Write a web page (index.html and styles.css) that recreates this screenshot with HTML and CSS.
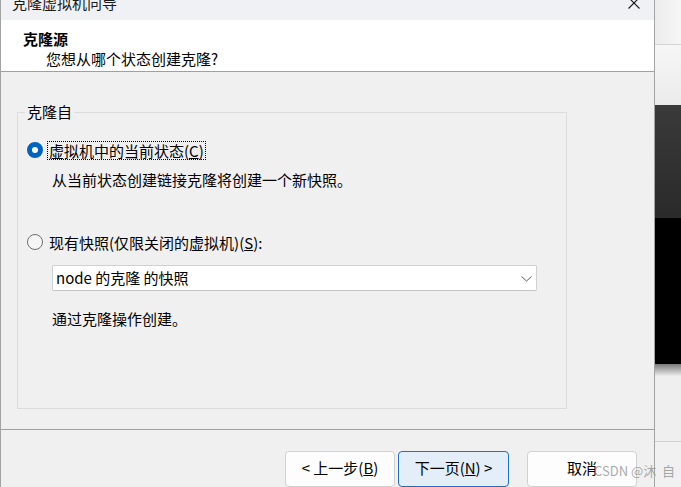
FILE: index.html
```html
<!DOCTYPE html>
<html lang="zh-CN">
<head>
<meta charset="utf-8">
<title>克隆虚拟机向导</title>
<link rel="stylesheet" href="styles.css">
</head>
<body>
<div class="screen">
  <div class="dialog">
    <div class="titlebar">
      <span class="title">克隆虚拟机向导</span>
      <svg class="close" width="12" height="12" viewBox="0 0 12 12"><path d="M0.5 0.5 L11.5 11.5 M11.5 0.5 L0.5 11.5" stroke="#1a1a1a" stroke-width="1.1" fill="none"/></svg>
    </div>
    <div class="header">
      <div class="h-title">克隆源</div>
      <div class="h-sub">您想从哪个状态创建克隆?</div>
    </div>
    <div class="content">
      <fieldset class="group">
        <legend class="legend">克隆自</legend>
        <div class="radio-row">
          <span class="radio checked"></span>
          <span class="label focused">虚拟机中的当前状态(<u>C</u>)</span>
        </div>
        <div class="desc desc-1">从当前状态创建链接克隆将创建一个新快照。</div>
        <div class="radio-row row-2">
          <span class="radio"></span>
          <span class="label">现有快照(仅限关闭的虚拟机)(<u>S</u>):</span>
        </div>
        <div class="select">
          <span class="select-text">node 的克隆 的快照</span>
          <svg class="chev" width="11" height="6" viewBox="0 0 11 6"><path d="M0.5 0.5 L5.5 5 L10.5 0.5" stroke="#5a5a5a" stroke-width="1" fill="none"/></svg>
        </div>
        <div class="desc desc-2">通过克隆操作创建。</div>
      </fieldset>
    </div>
    <div class="footer">
      <button class="btn">&lt; 上一步(<u>B</u>)</button>
      <button class="btn primary">下一页(<u>N</u>) &gt;</button>
      <button class="btn cancel">取消</button>
    </div>
  </div>
  <div class="side">
    <div class="s1"></div>
    <div class="s2"></div>
    <div class="s3"></div>
    <div class="s4"></div>
    <div class="s5"></div>
    <div class="s6"></div>
    <div class="s7"></div>
  </div>
  <div class="watermark">CSDN @沐 &nbsp;自</div>
</div>
</body>
</html>
```

FILE: styles.css
```css
html, body {
  margin: 0;
  padding: 0;
  overflow: hidden;
  width: 681px;
  height: 487px;
}
body {
  font-family: "Noto Sans CJK SC", "Noto Sans", sans-serif;
  font-size: 15px;
  color: #000;
}
.screen {
  position: relative;
  display: flex;
  width: 681px;
  height: 487px;
  overflow: hidden;
}
.dialog {
  width: 655px;
  box-sizing: border-box;
  border-left: 1px solid #a3a3a3;
  border-right: 1px solid #a3a3a3;
  background: #f0f0f0;
  display: flex;
  flex-direction: column;
  flex-shrink: 0;
}
.titlebar {
  height: 23px;
  background: #eff1f5;
  display: flex;
  align-items: flex-start;
  justify-content: space-between;
  overflow: hidden;
}
.title {
  margin-left: 11px;
  margin-top: -7px;
  line-height: 20px;
  font-size: 15px;
  color: #1a1a1a;
}
.close {
  margin-right: 14px;
  margin-top: -3px;
}
.header {
  background: #fff;
  border-bottom: 1px solid #a0a0a0;
  padding-top: 9px;
  box-sizing: border-box;
  height: 59px;
}
.h-title {
  margin-left: 22px;
  font-weight: bold;
  line-height: 20px;
}
.h-sub {
  margin-left: 45px;
  line-height: 20px;
}
.content {
  padding: 30px 0 20px 16px;
}
.group {
  margin: 0;
  width: 550px;
  box-sizing: border-box;
  border: 1px solid #dcdcdc;
  padding: 18px 0 79px 0;
  min-width: 0;
}
.legend {
  margin-left: 7px;
  padding: 0 2px;
  line-height: 20px;
}
.radio-row {
  display: flex;
  align-items: center;
  height: 20px;
  margin-left: 9px;
}
.row-2 {
  margin-top: 42px;
}
.radio {
  width: 16px;
  height: 16px;
  box-sizing: border-box;
  border-radius: 50%;
  border: 1px solid #6e6e6e;
  background: #f6f6f6;
  margin-right: 4px;
  flex-shrink: 0;
}
.radio.checked {
  border: 5px solid #0063c1;
  background: #fff;
}
.label {
  line-height: 17px;
  padding: 0 1px;
  border: 1px solid transparent;
}
.label.focused {
  border: 1px dotted #000;
}
.desc {
  margin-left: 34px;
  line-height: 20px;
}
.desc-1 {
  margin-top: 10px;
}
.select {
  margin: 13px 0 0 34px;
  width: 485px;
  height: 26px;
  box-sizing: border-box;
  background: #fff;
  border: 1px solid #cfcfcf;
  border-bottom-color: #c4c4c4;
  border-radius: 2px;
  display: flex;
  align-items: center;
  justify-content: space-between;
  padding: 0 4px 0 3px;
}
.select-text {
  line-height: 20px;
  white-space: pre;
}
.chev {
  margin-top: 2px;
}
.desc-2 {
  margin-top: 18px;
}
.footer {
  border-top: 1px solid #a0a0a0;
  padding: 21px 17px 0 0;
  display: flex;
  justify-content: flex-end;
  flex: 1;
}
.btn {
  font-family: inherit;
  font-size: 15px;
  color: #000;
  width: 110px;
  height: 36px;
  box-sizing: border-box;
  background: #fdfdfd;
  border: 1px solid #d0d0d0;
  border-radius: 4px;
  padding: 0 0 2px 0;
  line-height: 20px;
  margin: 0;
}
.btn.primary {
  width: 111px;
  margin-left: 3px;
  background: #e3eef9;
  border-color: #1f6fc2;
}
.btn.cancel {
  margin-left: 18px;
}
.side {
  flex: 1;
  display: flex;
  flex-direction: column;
}
.s1 {
  height: 44px;
  background: linear-gradient(90deg, #ececec, #f6f6f6);
  border-bottom: 1px solid #d4d4d4;
}
.s2 {
  height: 60px;
  background: linear-gradient(180deg, #f6f6f6, #ebebeb);
}
.s3 {
  height: 113px;
  background: linear-gradient(180deg, #3a3a3a, #2a2a2a);
}
.s4 {
  height: 146px;
  background: #000;
}
.s5 {
  height: 12px;
  background: linear-gradient(180deg, #7a7a7a, #ececec);
}
.s6 {
  height: 65px;
  background: #efefef;
  border-bottom: 1px solid #d2d2d2;
}
.s7 {
  flex: 1;
  background: #f1f1f1;
}
.watermark {
  position: absolute;
  left: 594px;
  top: 462px;
  font-size: 13px;
  line-height: 18px;
  color: rgba(140, 140, 140, 0.75);
  white-space: nowrap;
  font-family: "Noto Sans CJK SC", "Liberation Sans", sans-serif;
}
```
